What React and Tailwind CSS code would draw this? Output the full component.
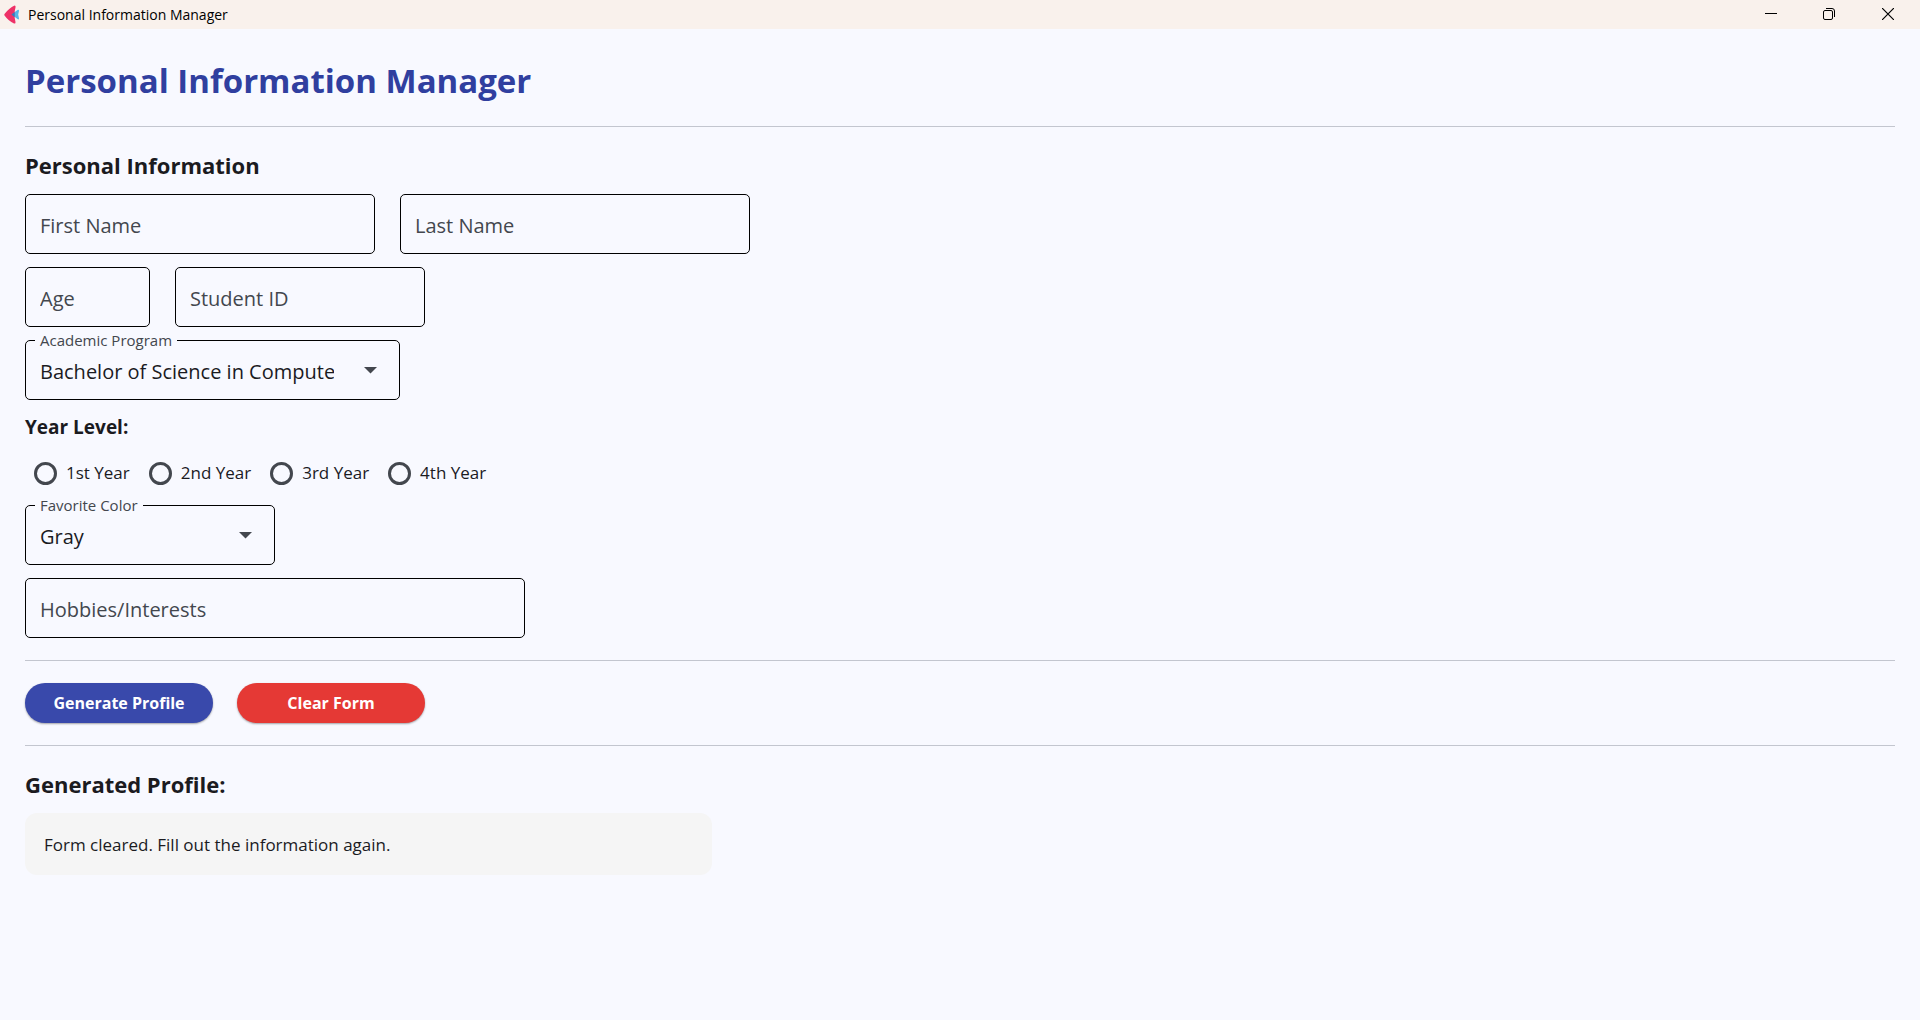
import { useState } from "react";

const programs = [
  "Bachelor of Science in Computer Science",
  "Bachelor of Science in Information Technology",
  "Bachelor of Science in Information Systems",
];
const colors = ["Gray", "Red", "Blue", "Green", "Yellow"];
const years = ["1st Year", "2nd Year", "3rd Year", "4th Year"];

function TitleBar() {
  return (
    <header className="flex h-[29px] items-center bg-[#f9f1ec] text-black">
      <svg className="ml-1 h-5 w-4" viewBox="0 0 16 20" aria-hidden="true">
        <path d="M7.5 9.5 13.5 5Q15.200 4.200 15 6L14.200 9.500l.800 4q0 1.500-1.500.500Z" fill="#55b5e6" />
        <path d="M10.500.500Q12 .500 11.500 2.500 9.500 9.500 11.500 17q.300 2-1.500 1.500Q4.500 16 .500 10.500q-.500-.800 0-1.500Q5 3 10.500.500Z" fill="#ee3167" />
        <path d="M10.600 7v5.200L7.500 9.600Z" fill="#2d7fc0" />
      </svg>
      <span className="ml-2 text-sm">Personal Information Manager</span>
      <div className="ml-auto flex h-full pr-0.5 pb-px">
        <button type="button" aria-label="Minimize" className="flex w-[58px] items-center justify-center">
          <svg width="12" height="12" viewBox="0 0 12 12" fill="none" stroke="currentColor">
            <path d="M0 5.500h12" />
          </svg>
        </button>
        <button type="button" aria-label="Restore" className="flex w-[58px] items-center justify-center">
          <svg width="12" height="12" viewBox="0 0 12 12" fill="none" stroke="currentColor">
            <rect x=".5" y="2.500" width="9" height="9" rx="1.500" />
            <path d="M3 .500h6a2.500 2.500 0 0 1 2.500 2.500v6" />
          </svg>
        </button>
        <button type="button" aria-label="Close" className="flex w-[60px] items-center justify-center">
          <svg width="12" height="12" viewBox="0 0 12 12" fill="none" stroke="currentColor" strokeWidth="1.200">
            <path d="m0 0 12 12M12 0 0 12" />
          </svg>
        </button>
      </div>
    </header>
  );
}

function TextField({ label, width }) {
  return (
    <input
      type="text"
      aria-label={label}
      placeholder={label}
      className={`h-[60px] rounded-[5px] border border-black bg-transparent px-3.5 pt-0.5 text-xl text-[#1b1b1f] outline-none placeholder:text-[#43474e] ${width}`}
    />
  );
}

function SelectField({ id, label, options, width }) {
  return (
    <div className={`relative ${width}`}>
      <label htmlFor={id} className="absolute -top-2.5 left-2.5 bg-[#f8f9ff] px-[5px] text-[15px] leading-5 text-[#43474e]">
        {label}
      </label>
      <div className="flex h-[60px] items-center rounded-[5px] border border-black pr-[22px] pl-3.5">
        <select id={id} className="mt-1 min-w-0 flex-1 appearance-none overflow-hidden bg-transparent text-xl text-[#1b1b1f] outline-none">
          {options.map((o) => (
            <option key={o}>{o}</option>
          ))}
        </select>
        <svg className="ml-[30px] shrink-0 text-[#43474e]" width="13" height="7" viewBox="0 0 13 7" aria-hidden="true">
          <path d="M0 0h13L6.500 6.500Z" fill="currentColor" />
        </svg>
      </div>
    </div>
  );
}

function PillButton({ color, children, ...rest }) {
  return (
    <button type="button" className={`h-10 w-[188px] rounded-full text-base font-bold text-white shadow-[0_1px_2px_rgba(0,0,0,0.35)] ${color}`} {...rest}>
      {children}
    </button>
  );
}

export default function App() {
  const [year, setYear] = useState("");
  return (
    <div className="min-h-screen bg-[#f8f9ff] font-['Open_Sans',sans-serif] text-[#1b1b1f]">
      <TitleBar />
      <main className="px-[25px] pt-7">
        <h1 className="text-[33px] leading-12 font-bold text-[#303f9f]">Personal Information Manager</h1>
        <hr className="mt-[21px] border-[#c3c6cf]" />

        <form>
          <h2 className="mt-[23px] text-[22px] leading-[31px] font-bold">Personal Information</h2>
          <div className="mt-[13px] flex flex-col gap-[13px]">
            <div className="flex gap-[25px]">
              <TextField label="First Name" width="w-[350px]" />
              <TextField label="Last Name" width="w-[350px]" />
            </div>
            <div className="flex gap-[25px]">
              <TextField label="Age" width="w-[125px]" />
              <TextField label="Student ID" width="w-[250px]" />
            </div>
            <SelectField id="program" label="Academic Program" options={programs} width="w-[375px]" />
          </div>

          <fieldset>
            <legend className="pt-[13px] text-[19px] leading-7 font-bold">Year Level:</legend>
            <div className="mt-[7px] flex h-[50px] items-center gap-[19px] pl-[9px]">
              {years.map((y) => (
                <label key={y} className="flex items-center gap-[9px] text-[17px]">
                  <input
                    type="radio"
                    name="year"
                    value={y}
                    checked={year === y}
                    onChange={() => setYear(y)}
                    className="size-[23px] appearance-none rounded-full border-3 border-[#43474e] checked:border-[7px]"
                  />
                  {y}
                </label>
              ))}
            </div>
          </fieldset>

          <div className="mt-[7px] flex flex-col gap-[13px]">
            <SelectField id="color" label="Favorite Color" options={colors} width="w-[250px]" />
            <TextField label="Hobbies/Interests" width="w-[500px]" />
          </div>

          <hr className="mt-[22px] border-[#c3c6cf]" />
          <div className="mt-[22px] flex gap-6">
            <PillButton color="bg-[#3949ab]">Generate Profile</PillButton>
            <PillButton color="bg-[#e53935]">Clear Form</PillButton>
          </div>
          <hr className="mt-[22px] border-[#c3c6cf]" />
        </form>

        <section>
          <h2 className="mt-[23px] text-[22px] leading-[31px] font-bold">Generated Profile:</h2>
          <p className="mt-[13px] w-[687px] max-w-full rounded-xl bg-[#f5f5f5] px-[19px] pt-5 pb-[18px] text-[17px] leading-6">
            Form cleared. Fill out the information again.
          </p>
        </section>
      </main>
    </div>
  );
}
